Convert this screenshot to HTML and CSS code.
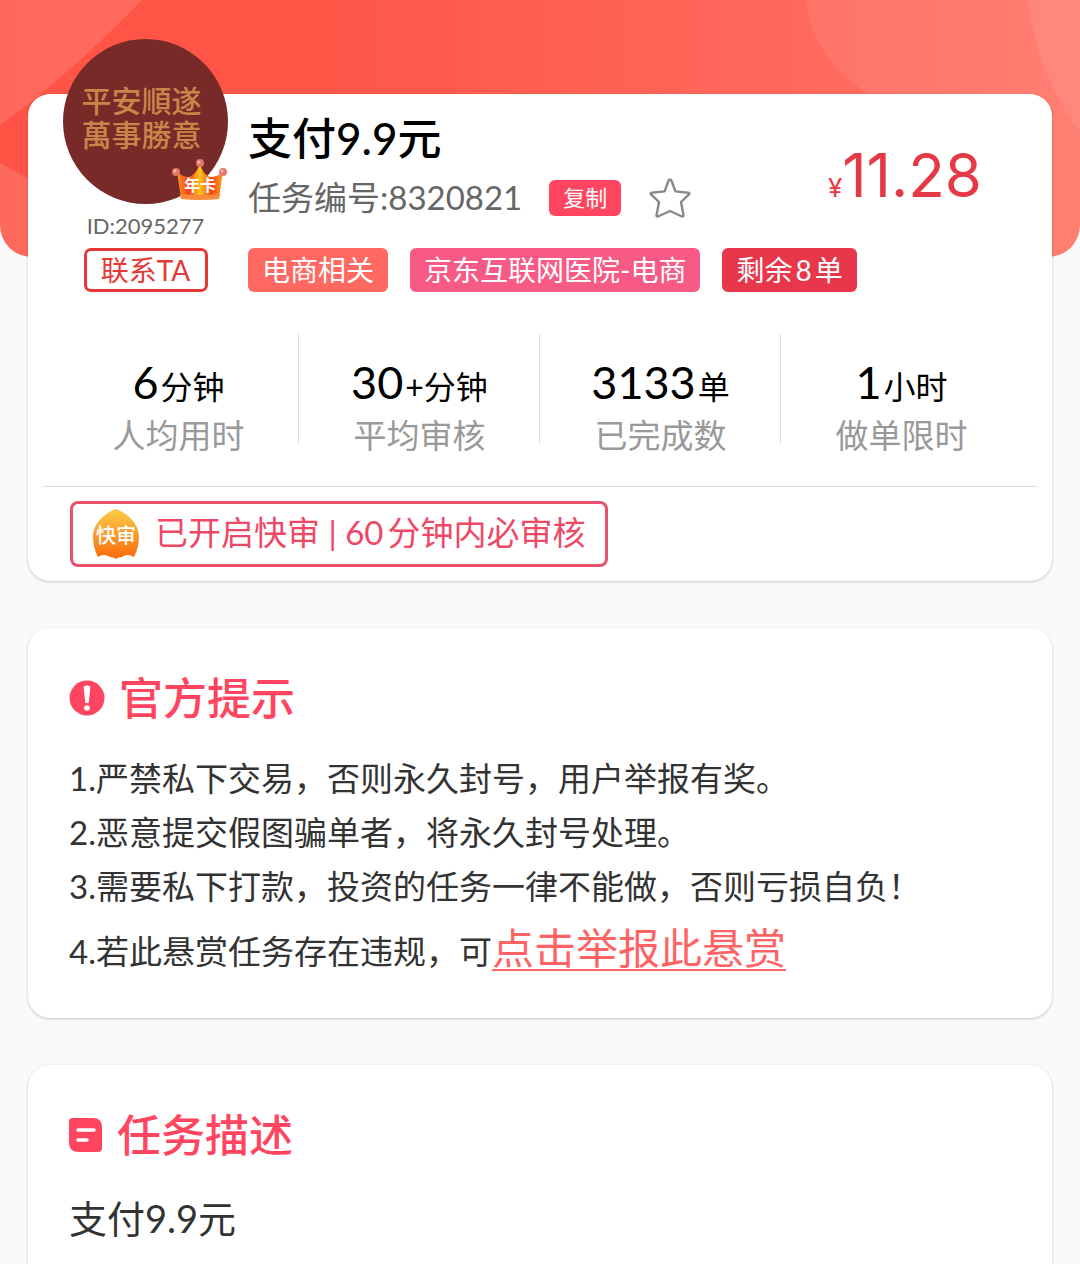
FILE: index.html
```html
<!DOCTYPE html>
<html lang="zh-CN">
<head>
<meta charset="utf-8">
<meta name="viewport" content="width=device-width, initial-scale=1">
<title>任务详情</title>
<link rel="stylesheet" href="styles.css">
</head>
<body>
<div class="hero" aria-hidden="true">
  <svg class="hero-art" viewBox="0 0 1080 257" preserveAspectRatio="none">
    <defs>
      <linearGradient id="heroFill" x1="0" y1="0" x2="1" y2="0">
        <stop offset="0" stop-color="#ff5345"/>
        <stop offset=".3" stop-color="#ff5648"/>
        <stop offset="1" stop-color="#ff7568"/>
      </linearGradient>
    </defs>
    <rect width="1080" height="257" fill="url(#heroFill)"/>
    <g fill="#fff" fill-opacity=".13">
      <path d="M0 0H142Q65 79 0 125Z"/>
      <path d="M0 163Q14 172 28 178Q90 205 120 257H0Z"/>
    </g>
    <path d="M806 0Q810 55 868 94Q940 150 1040 257H1080V0Z" fill="#fff" fill-opacity=".07"/>
    <path d="M1028 0Q1037 75 1080 132V0Z" fill="#fff" fill-opacity=".08"/>
  </svg>
</div>
<main class="page">
  <section class="card">
    <div class="head">
      <div class="user">
        <div class="avatar">
          <span class="motto">平安順遂<br>萬事勝意</span>
          <svg class="crown" viewBox="0 0 56 42" role="img" aria-label="年卡">
            <defs>
              <linearGradient id="crownFill" x1="0" y1="0" x2="1" y2="0">
                <stop offset="0" stop-color="#ff9a1c"/>
                <stop offset=".25" stop-color="#f8401c"/>
                <stop offset=".5" stop-color="#ffc41e"/>
                <stop offset=".75" stop-color="#f3401c"/>
                <stop offset="1" stop-color="#ffa51c"/>
              </linearGradient>
            </defs>
            <path d="M5 13Q14 20 19 17Q25 14 28 4Q30 14 36 17Q42 20 51 13L47 39Q28 41 9 39Z" fill="url(#crownFill)"/>
            <path d="M8 35Q28 37 48 35L47 40Q28 42 9 40Z" fill="#f98a3c"/>
            <g fill="#e0786a"><circle cx="28" cy="4" r="4"/><circle cx="4" cy="13" r="4"/><circle cx="51" cy="13" r="4"/></g>
            <g fill="#f6b9a8"><circle cx="27" cy="3" r="1.5"/><circle cx="3" cy="12" r="1.5"/><circle cx="50" cy="12" r="1.5"/></g>
            <text x="28" y="32" class="crown-text">年卡</text>
          </svg>
        </div>
        <p class="user-id">ID:2095277</p>
        <button class="contact" type="button">联系TA</button>
      </div>
      <div class="info">
        <div class="info-top">
          <div>
            <h1 class="title">支付9.9元</h1>
            <div class="number">
              <span class="number-text">任务编号:8320821</span>
              <button class="copy" type="button">复制</button>
              <button class="star" type="button" aria-label="收藏">
                <svg viewBox="0 0 42 42" width="42" height="42"><path d="M21 3Q22 2 22.6 4L26.4 14.4L39.5 15.8Q41.5 16.4 39.5 17.8L32 25L34.5 38.2Q34.5 40 33 39.5L21 34L9 39.5Q7.5 40 7.5 38.2L10 25L2.5 17.8Q0.5 16.4 2.5 15.8L15.6 14.4L19.4 4Q20 2 21 3Z" fill="none" stroke="#888" stroke-width="2.4" stroke-linejoin="round"/></svg>
              </button>
            </div>
          </div>
          <p class="price"><span class="yen">¥</span>11.28</p>
        </div>
        <ul class="tags">
          <li class="tag tag-coral">电商相关</li>
          <li class="tag tag-pink">京东互联网医院-电商</li>
          <li class="tag tag-red">剩余<span class="spaced">8</span>单</li>
        </ul>
      </div>
    </div>
    <dl class="stats">
      <div class="stat"><dd><b>6</b>分钟</dd><dt>人均用时</dt></div>
      <div class="stat"><dd><b>30</b>+分钟</dd><dt>平均审核</dt></div>
      <div class="stat"><dd><b>3133</b>单</dd><dt>已完成数</dt></div>
      <div class="stat"><dd><b>1</b>小时</dd><dt>做单限时</dt></div>
    </dl>
    <div class="fast">
      <p class="fast-box">
        <svg class="fast-icon" viewBox="0 0 46 50" width="46" height="50" role="img" aria-label="快审">
          <defs>
            <linearGradient id="fastFill" x1="0" y1="0" x2="0" y2="1">
              <stop offset="0" stop-color="#fbcb45"/>
              <stop offset=".5" stop-color="#fb9c2d"/>
              <stop offset="1" stop-color="#fa6a0a"/>
            </linearGradient>
          </defs>
          <path d="M23 0C29 2 46 11 46 28Q46 38 41 48Q34 44 29 48Q25 48 23 50Q21 48 17 48Q11 44 5 48Q0 38 0 28C0 11 17 2 23 0Z" fill="url(#fastFill)"/>
          <text x="23" y="34" class="fast-text">快审</text>
        </svg>
        <span>已开启快审 | <span class="minutes">60</span>分钟内必审核</span>
      </p>
    </div>
  </section>

  <section class="card panel">
    <h2 class="panel-title">
      <svg viewBox="0 0 36 36" width="36" height="36" aria-hidden="true"><circle cx="18" cy="18" r="17.5" fill="#ff4560"/><path d="M14.7 7.5Q14.6 5.5 18 5.5Q21.4 5.5 21.3 7.5L19.8 22.5Q18 24 16.2 22.5Z" fill="#fff"/><circle cx="18" cy="28" r="2.8" fill="#fff"/></svg>
      官方提示
    </h2>
    <ol class="rules">
      <li>1.严禁私下交易，否则永久封号，用户举报有奖。</li>
      <li>2.恶意提交假图骗单者，将永久封号处理。</li>
      <li>3.需要私下打款，投资的任务一律不能做，否则亏损自负！</li>
      <li class="report">4.若此悬赏任务存在违规，可<a href="#report">点击举报此悬赏</a></li>
    </ol>
  </section>

  <section class="card panel">
    <h2 class="panel-title">
      <svg viewBox="0 0 34 36" width="34" height="36" aria-hidden="true"><path d="M4 1H24Q33 1 33 10V31Q33 35 29 35H10Q0 35 0 26V4Q0 1 4 1Z" fill="#ff4560"/><path d="M9 13H25M9 23H18" stroke="#fff" stroke-width="3.4" stroke-linecap="round"/></svg>
      任务描述
    </h2>
    <p class="desc">支付9.9元</p>
  </section>
</main>
</body>
</html>
```
FILE: styles.css
```css
* { box-sizing: border-box; }

body {
  margin: 0;
  background: #fafafa;
  color: #333;
  font-family: Lato, "Noto Sans CJK SC", sans-serif;
  font-size: 33px;
}

h1, h2, p, ul, ol, dl, dd { margin: 0; padding: 0; }
ul, ol { list-style: none; }
button { font: inherit; padding: 0; border: 0; background: none; cursor: pointer; }

.hero {
  height: 257px;
  margin-bottom: -163px;
  border-radius: 0 0 32px 32px;
  overflow: hidden;
}
.hero-art { display: block; width: 100%; height: 100%; }

.page {
  position: relative;
  display: flex;
  flex-direction: column;
  gap: 47px;
  padding: 0 28px;
}

.card {
  background: #fff;
  border-radius: 22px;
  box-shadow: 0 1px 3px rgba(0, 0, 0, .22);
}
.card:last-child { padding-bottom: 60px; }

.head { display: flex; gap: 20px; padding: 0 70px 0 35px; }

.user { flex: none; width: 165px; margin-top: -55px; text-align: center; }
.avatar {
  position: relative;
  display: flex;
  align-items: center;
  justify-content: center;
  height: 165px;
  padding: 0 8px 12px 0;
  border-radius: 50%;
  background: #772a28;
}
.motto {
  color: #c98549;
  font-family: "Noto Sans CJK TC", sans-serif;
  font-size: 30px;
  font-weight: 500;
  line-height: 34px;
}
.crown { position: absolute; right: 0; bottom: 3px; width: 56px; height: 42px; }
.crown-text { fill: #fff; font-size: 16px; font-weight: 700; text-anchor: middle; }
.user-id { color: #666; font-size: 22px; line-height: 44px; }
.contact {
  width: 124px;
  height: 44px;
  border: 3px solid #e53935;
  border-radius: 7px;
  color: #e53935;
  font-size: 28px;
  line-height: 38px;
}

.info { flex: 1; padding-top: 14px; }
.info-top { display: flex; justify-content: space-between; align-items: flex-end; }
.title { color: #000; font-size: 44px; font-weight: 500; line-height: 60px; }
.number { display: flex; align-items: center; height: 60px; color: #666; }
.number-text { padding-bottom: 4px; }
.copy {
  width: 72px;
  height: 36px;
  margin: 0 28px 0 27px;
  border-radius: 6px;
  background: #ff4560;
  color: #fff;
  font-size: 22px;
  line-height: 36px;
}
.star { height: 42px; }
.star svg { display: block; }
.price {
  color: #e63946;
  font-family: Inter, "Noto Sans CJK SC", sans-serif;
  font-size: 60px;
  line-height: 80px;
}
.yen { font-size: 26px; }

.tags { display: flex; gap: 22px; margin-top: 20px; }
.tag {
  height: 44px;
  padding: 0 14px;
  border-radius: 6px;
  color: #fff;
  font-size: 28px;
  line-height: 44px;
  white-space: nowrap;
}
.tag-coral { background: #ff6961; }
.tag-pink { background: #f75a85; }
.tag-red { background: #e8364b; }
.spaced { margin: 0 3px; }

.stats {
  display: grid;
  grid-template-columns: repeat(4, 1fr);
  margin: 42px 30px 0;
  text-align: center;
}
.stat {
  height: 152px;
  padding-top: 20px;
  background: linear-gradient(#ddd, #ddd) right top / 1px 110px no-repeat;
}
.stat:last-child { background: none; }
.stat dd { color: #000; font-size: 32px; line-height: 56px; }
.stat b { margin-right: 2px; font-size: 45px; font-weight: 400; }
.stat dt { color: #999; line-height: 40px; }

.fast {
  margin: 0 15px;
  padding: 14px 27px;
  border-top: 1px solid #ddd;
}
.fast-box {
  display: flex;
  align-items: center;
  gap: 16px;
  width: fit-content;
  height: 66px;
  padding: 0 20px;
  border: 3px solid #e8506c;
  border-radius: 8px;
  color: #ee4866;
  line-height: 56px;
}
.fast-box > span { padding-bottom: 4px; }
.minutes { margin-right: 4px; }
.fast-icon { flex: none; }
.fast-text { fill: #fff; font-size: 20px; font-weight: 500; text-anchor: middle; }

.panel { padding: 37px 41px 31px; }
.panel-title {
  display: flex;
  align-items: center;
  gap: 14px;
  color: #ff4560;
  font-size: 44px;
  font-weight: 500;
  line-height: 66px;
}
.rules { margin-top: 20px; line-height: 54px; }
.rules .report { line-height: 71px; }
.rules a { color: #ff6464; font-size: 42px; text-decoration-thickness: 2px; text-underline-offset: 5px; }
.desc { margin-top: 22px; font-size: 38px; line-height: 56px; }
```
